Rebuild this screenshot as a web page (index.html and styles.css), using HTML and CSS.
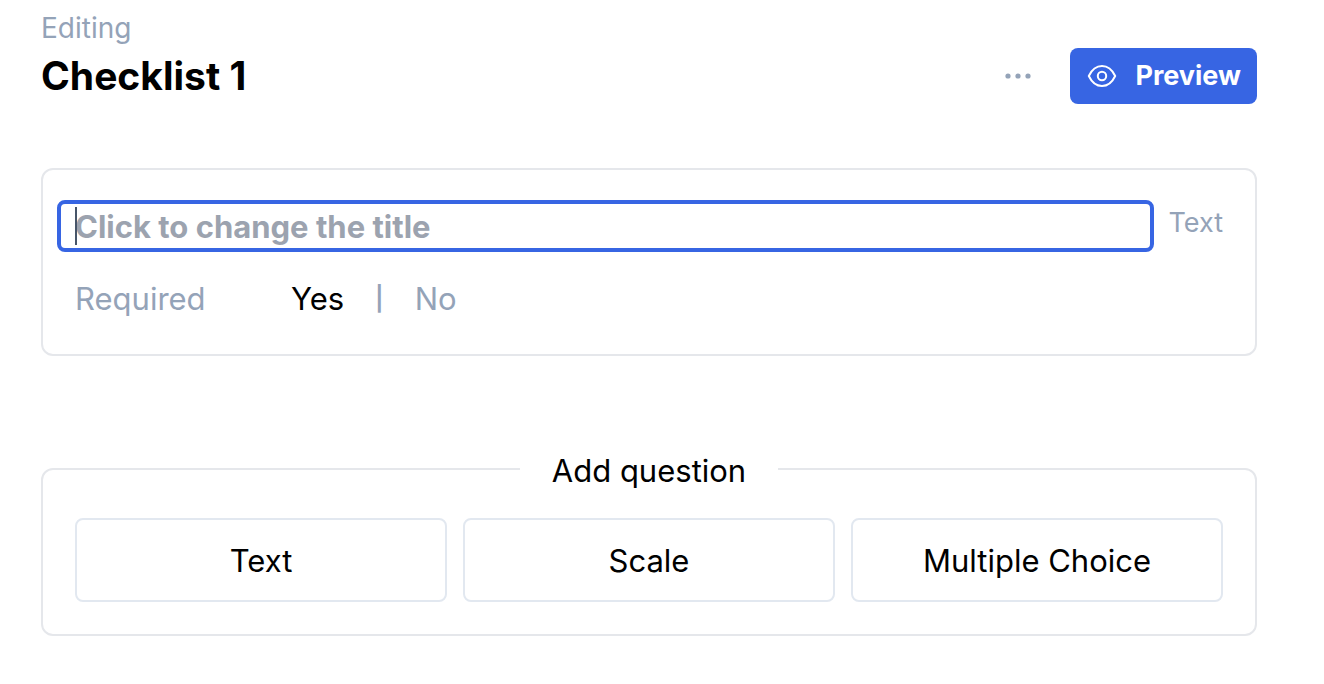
FILE: index.html
```html
<!DOCTYPE html>
<html lang="en">
<head>
    <meta charset="UTF-8">
    <meta name="viewport" content="width=device-width, initial-scale=1.0">
    <title>Checklist 1</title>
    <link rel="stylesheet" href="styles.css">
</head>
<body>
    <header class="header">
        <div>
            <p class="subtitle">Editing</p>
            <h1 class="title">Checklist 1</h1>
        </div>
        <div class="actions">
            <button type="button" class="more" aria-label="More options">
                <svg width="28" height="28" viewBox="0 0 28 28" fill="currentColor">
                    <circle cx="4" cy="14" r="2.6"/>
                    <circle cx="14" cy="14" r="2.6"/>
                    <circle cx="24" cy="14" r="2.6"/>
                </svg>
            </button>
            <button type="button" class="preview">
                <svg width="30" height="30" viewBox="0 0 30 30" fill="none" stroke="currentColor" stroke-width="2" stroke-linejoin="round">
                    <path d="M1.8 15C5 8.300 9.400 5 15 5S25 8.300 28.200 15C25 21.700 20.600 25 15 25S5 21.700 1.800 15Z"/>
                    <circle cx="15" cy="15" r="4.200"/>
                </svg>
                Preview
            </button>
        </div>
    </header>

    <main>
        <section class="card question">
            <div class="question-head">
                <div class="title-field">
                    <input type="text" class="title-input" placeholder="Click to change the title" aria-label="Question title">
                </div>
                <span class="question-type">Text</span>
            </div>
            <div class="required">
                <span class="required-label">Required</span>
                <button type="button" class="option selected">Yes</button>
                <span class="divider">|</span>
                <button type="button" class="option">No</button>
            </div>
        </section>

        <fieldset class="card add">
            <legend class="add-title">Add question</legend>
            <div class="add-list">
                <button type="button" class="add-button">Text</button>
                <button type="button" class="add-button">Scale</button>
                <button type="button" class="add-button">Multiple Choice</button>
            </div>
        </fieldset>
    </main>
</body>
</html>
```

FILE: styles.css
```css
* {
    box-sizing: border-box;
}
body {
    margin: 0;
    padding: 8px 67px 48px 41px;
    font-family: Inter, "Liberation Sans", sans-serif;
    font-size: 31px;
    line-height: 48px;
    color: #000;
    background-color: #fff;
}
button, input {
    font: inherit;
    color: inherit;
    background: none;
    border: none;
    padding: 0;
    margin: 0;
}
button {
    cursor: pointer;
}
svg {
    display: block;
}
.header {
    display: flex;
    justify-content: space-between;
    align-items: flex-end;
    margin-bottom: 64px;
}
.subtitle {
    margin: 0;
    font-size: 28px;
    line-height: 40px;
    color: #94a3b8;
}
.title {
    margin: 0;
    font-size: 39px;
    font-weight: 700;
    line-height: 56px;
}
.actions {
    display: flex;
    align-items: center;
    gap: 38px;
}
.more {
    color: #94a3b8;
}
.preview {
    display: flex;
    align-items: center;
    gap: 18px;
    height: 56px;
    padding: 0 16px 0 17px;
    border-radius: 8px;
    background-color: #3765e3;
    color: #fff;
    font-size: 27px;
    font-weight: 700;
}
.card {
    border: 2px solid #e5e7eb;
    border-radius: 12px;
}
.question {
    padding: 30px 32px 31px 14px;
}
.question-head {
    display: flex;
    align-items: flex-start;
    gap: 14px;
}
.title-field {
    position: relative;
    flex: 1;
}
.title-input {
    display: block;
    width: 100%;
    height: 52px;
    padding: 0 14px;
    border: 4px solid #3765e3;
    border-radius: 8px;
    font-weight: 700;
    outline: none;
}
.title-input::placeholder {
    color: #9ca3af;
    opacity: 1;
}
/* text cursor */
.title-field::before {
    content: "";
    position: absolute;
    left: 18px;
    top: 7px;
    width: 2px;
    height: 38px;
    background-color: #475569;
}
.question-type {
    font-size: 27px;
    line-height: 46px;
    color: #94a3b8;
}
.required {
    display: flex;
    align-items: center;
    gap: 31px;
    margin-top: 23px;
    padding-left: 18px;
    color: #94a3b8;
}
.required-label {
    width: 185px;
}
.divider {
    font-size: 24px;
    font-weight: 600;
}
.selected {
    color: #000;
}
.add {
    margin: 87px 0 0;
    padding: 23px 32px 32px;
}
.add-title {
    margin: 0 auto;
    padding: 4px 32px 0;
}
.add-list {
    display: grid;
    grid-template-columns: repeat(3, 1fr);
    gap: 16px;
}
.add-button {
    height: 84px;
    padding-top: 2px;
    border: 2px solid #e2e8f0;
    border-radius: 8px;
}
```
